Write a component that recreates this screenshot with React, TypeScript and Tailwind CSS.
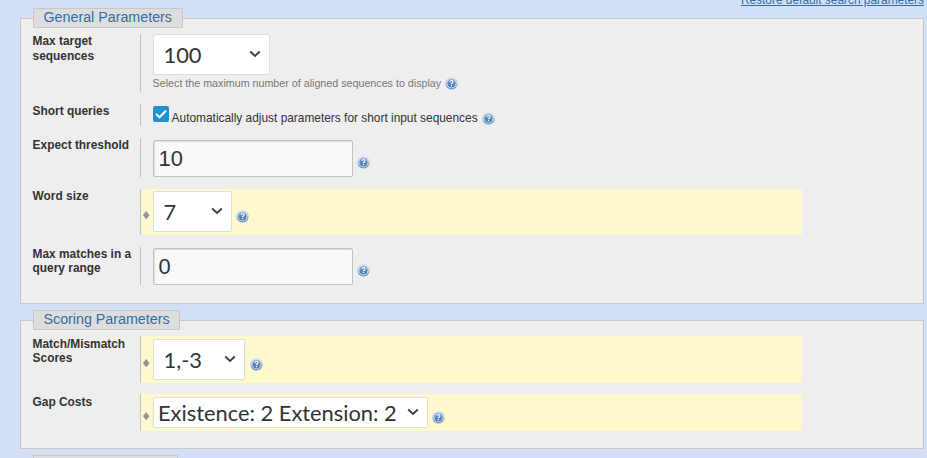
import React from "react";

function Help({ className }: { className: string }) {
  return (
    <svg viewBox="0 0 13 13" className={`h-[13px] w-[13px] shrink-0 ${className}`}>
      <defs>
        <linearGradient id="ball" x1="0" y1="0" x2="0" y2="1">
          <stop offset="0" stopColor="#7d9fcd" />
          <stop offset="1" stopColor="#4674b3" />
        </linearGradient>
        <linearGradient id="rim" x1="0" y1="0" x2="0" y2="1">
          <stop offset="0" stopColor="#dbe7f5" />
          <stop offset="0.5" stopColor="#a9c3e2" />
          <stop offset="1" stopColor="#5c89c3" />
        </linearGradient>
      </defs>
      <circle cx="6.5" cy="6.3" r="6.2" fill="url(#rim)" />
      <circle cx="6.5" cy="6.3" r="4.6" fill="url(#ball)" stroke="#d5e2f3" strokeWidth="0.9" />
      <path d="M5 4.9C5.1 3 8 3.1 8 4.8C8 5.9 6.5 6 6.5 7.2M6.5 8.1V9.3" fill="none" stroke="#f4f8fd" strokeWidth="1.2" />
    </svg>
  );
}

function Select({ text, className }: { text: string; className: string }) {
  return (
    <div className={`flex shrink-0 justify-between rounded-[2px] border border-[#ddd] bg-white pr-2 font-['Lato',sans-serif] text-[21.85px] leading-[26px] text-[#333] ${className}`}>
      <span className="whitespace-nowrap">{text}</span>
      <svg viewBox="0 0 12 8" className="mt-2 h-2 w-3 shrink-0">
        <path d="M1.2 1.5L6 6L10.8 1.5" fill="none" stroke="#444" strokeWidth="2" />
      </svg>
    </div>
  );
}

function Field({ value }: { value: string }) {
  return (
    <div className="h-[37px] w-[200px] shrink-0 rounded-[2px] border border-[#c2c2c2] bg-[#f9f9f9] pt-[5px] pl-[4.5px] text-[21.85px] leading-[26px] text-[#333] shadow-[inset_1px_1px_1px_#ddd]">
      {value}
    </div>
  );
}

function Diamond({ className }: { className: string }) {
  return (
    <svg viewBox="0 0 7 9" className={`mr-[3px] ml-0.5 h-[9px] w-[7px] shrink-0 ${className}`}>
      <path d="M3.2 0.1L6.5 4.2L3.2 8.3L-0.1 4.2Z" fill="#959595" />
    </svg>
  );
}

function Row({ label, text = "leading-[14.5px]", className, body, children }: { label: React.ReactNode; text?: string; className: string; body: string; children: React.ReactNode }) {
  return (
    <div className={`flex ${className}`}>
      <div className={`w-[119px] shrink-0 pl-[11.6px] text-[11.9px] font-bold whitespace-nowrap text-[#333] ${text}`}>{label}</div>
      <div className={`flex w-[662px] items-start border-l border-[#c2c2c2] ${body}`}>{children}</div>
    </div>
  );
}

function Section({ title, legend, className, children }: { title: string; legend: string; className: string; children?: React.ReactNode }) {
  return (
    <section className={`w-[904px] shrink-0 border border-[#c8c8c8] bg-[#eee] ${className}`}>
      <h2 className={`-mt-[11px] ml-3 h-5 border border-[#c8c8c8] bg-[#ddd] pl-[9.5px] text-[14.28px] leading-[17px] whitespace-nowrap text-[#336ea5] ${legend}`}>{title}</h2>
      {children}
    </section>
  );
}

export default function App() {
  return (
    <main className="flex h-[458px] w-[927px] flex-col overflow-hidden bg-[#d3dff5] pl-5 font-['Liberation_Sans',Arial,sans-serif]">
      <div className="-mt-[7px] h-[25px] shrink-0 pr-[3px] text-right text-[11.9px] leading-[14px] text-[#336ea5] underline">Restore default search parameters</div>
      <Section title="General Parameters" legend="w-[150px]" className="h-[286px]">
        <Row className="mt-1.5 h-[58px]" body="flex-col pl-3" label={<>Max target<br />sequences</>}>
          <Select text="100" className="h-[41px] w-[117px] pt-[7px] pl-[9.5px]" />
          <div className="mt-px -ml-[0.4px] flex items-start text-[10.71px] leading-[14px] whitespace-nowrap text-[#777]">
            <span>Select the maximum number of aligned sequences to display</span>
            <Help className="mt-px ml-[3.4px]" />
          </div>
        </Row>
        <Row className="mt-3 h-[22px]" body="pl-3" label="Short queries">
          <div className="mt-0.5 flex h-4 w-4 shrink-0 items-center justify-center rounded-[2px] bg-[#2090d2]">
            <svg viewBox="0 0 12 10" className="h-[10px] w-3"><path d="M1 5L4.5 8.3L11 1.6" fill="none" stroke="#fff" strokeWidth="2" /></svg>
          </div>
          <span className="mt-[7px] ml-[2.6px] text-[11.9px] leading-[14px] whitespace-nowrap text-[#333]">Automatically adjust parameters for short input sequences</span>
          <Help className="mt-2 ml-1" />
        </Row>
        <Row className="mt-3 h-[39px]" body="pt-0.5 pl-3" label="Expect threshold">
          <Field value="10" />
          <Help className="mt-4 ml-1" />
        </Row>
        <Row className="mt-3 h-[46px]" body="bg-[#fef8cf]" label="Word size">
          <Diamond className="mt-[22px]" />
          <Select text="7" className="mt-0.5 h-[41px] w-[79px] pt-[7px] pl-[9.5px]" />
          <Help className="mt-[21px] ml-1" />
        </Row>
        <Row className="mt-3 h-[38px]" body="pt-px pl-3" text="leading-[14px]" label={<>Max matches in a<br />query range</>}>
          <Field value="0" />
          <Help className="mt-4 ml-1" />
        </Row>
      </Section>
      <Section title="Scoring Parameters" legend="w-[147px]" className="mt-4 h-[129px]">
        <Row className="mt-1.5 h-[47px]" body="bg-[#fef8cf]" text="pt-px leading-[14px]" label={<>Match/Mismatch<br />Scores</>}>
          <Diamond className="mt-[23px]" />
          <Select text="1,-3" className="mt-[3px] h-[41px] w-[92px] pt-[7px] pl-[9.5px]" />
          <Help className="mt-[22px] ml-[5px]" />
        </Row>
        <Row className="mt-[11px] h-[37px]" body="bg-[#fef8cf]" text="pt-px leading-[14px]" label="Gap Costs">
          <Diamond className="mt-[18px]" />
          <Select text="Existence: 2 Extension: 2" className="mt-[3px] h-[31px] w-[275px] pt-0.5 pl-1" />
          <Help className="mt-[17px] ml-1" />
        </Row>
      </Section>
      <Section title="" legend="w-[145px]" className="mt-4 h-10" />
    </main>
  );
}
